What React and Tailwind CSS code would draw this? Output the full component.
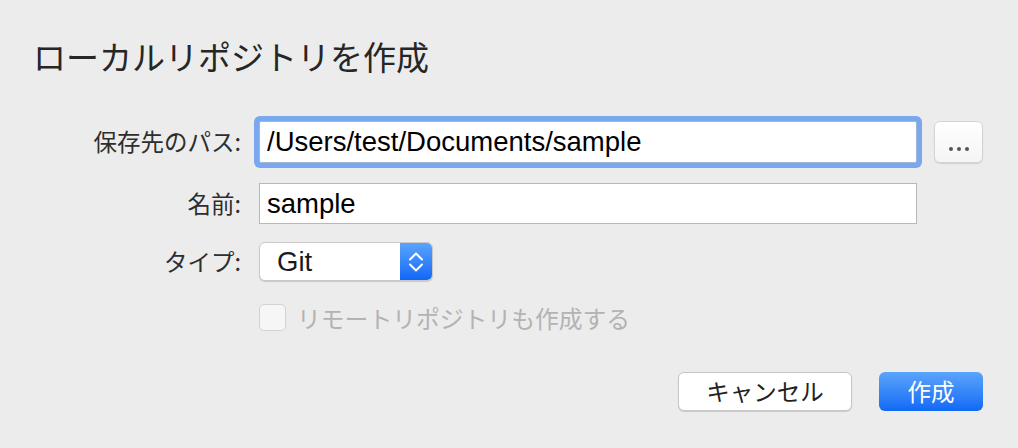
import { useState } from 'react';

const jp = 'font-["Noto_Sans_CJK_JP","Noto_Sans",sans-serif]';
const latin = 'font-["Liberation_Sans","Noto_Sans_CJK_JP",sans-serif]';

function Label({ children }) {
  return (
    <div className={`w-[208px] shrink-0 text-right text-[23.5px] leading-none text-[#2e2e2e] ${jp}`}>
      {children}
    </div>
  );
}

function Chevrons() {
  return (
    <svg width="16" height="26" viewBox="0 0 16 26" fill="none" stroke="white" strokeWidth="2" strokeLinecap="round" strokeLinejoin="round">
      <path d="M2 10.5L8 4.5l6 6" />
      <path d="M2 15.5l6 6 6-6" />
    </svg>
  );
}

export default function App() {
  const [path, setPath] = useState('/Users/test/Documents/sample');
  const [name, setName] = useState('sample');

  return (
    <div className="w-[1018px] h-[448px] bg-[#ececec] pl-[33px] pt-[38px] overflow-hidden">
      <h1 className={`text-[33px] leading-[36px] text-[#262626] ${jp}`}>ローカルリポジトリを作成</h1>

      {/* path row */}
      <div className="flex items-center mt-[47px]">
        <Label>保存先のパス:</Label>
        <div className="ml-[18px] w-[658px] h-[42px] rounded-[2px] ring-[5px] ring-[#79a8ee] border border-[#9fb6d8] bg-white flex items-center">
          <input
            value={path}
            onChange={(e) => setPath(e.target.value)}
            className={`w-full bg-transparent outline-none pl-[7px] text-[27.5px] text-black ${latin}`}
          />
        </div>
        <button className="ml-[17px] w-[49px] h-[42px] rounded-[6px] bg-gradient-to-b from-white to-[#f5f5f5] border border-[#d4d4d4] shadow-[0_1px_1px_rgba(0,0,0,0.12)] flex items-end justify-center pb-[11px] gap-[4px]">
          <span className="w-[4px] h-[4px] rounded-full bg-[#555]" />
          <span className="w-[4px] h-[4px] rounded-full bg-[#555]" />
          <span className="w-[4px] h-[4px] rounded-full bg-[#555]" />
        </button>
      </div>

      {/* name row */}
      <div className="flex items-center mt-[20px]">
        <Label>名前:</Label>
        <div className="ml-[18px] w-[658px] h-[41px] border border-[#b8b8b8] bg-white flex items-center">
          <input
            value={name}
            onChange={(e) => setName(e.target.value)}
            className={`w-full bg-transparent outline-none pl-[7px] text-[27.5px] text-black ${latin}`}
          />
        </div>
      </div>

      {/* type row */}
      <div className="flex items-center mt-[18px]">
        <Label>タイプ:</Label>
        <div className="ml-[18px] w-[174px] h-[39px] rounded-[6px] bg-white border border-[#c9c9c9] shadow-[0_1px_1px_rgba(0,0,0,0.15)] flex overflow-hidden">
          <div className={`flex-1 flex items-center pl-[17px] text-[27.5px] text-[#1a1a1a] ${latin}`}>Git</div>
          <div className="w-[32px] bg-gradient-to-b from-[#5aa4fb] to-[#0f67f6] flex items-center justify-center">
            <Chevrons />
          </div>
        </div>
      </div>

      {/* remote option */}
      <div className="flex items-center mt-[23px] ml-[226px]">
        <div className="w-[27px] h-[27px] rounded-[5px] border border-[#d3d3d3] bg-[#f6f6f6]" />
        <span className={`ml-[11px] text-[23.8px] leading-none text-[#b3b3b3] ${jp}`}>リモートリポジトリも作成する</span>
      </div>

      {/* dialog actions */}
      <div className="flex justify-end mt-[41px] pr-[35px] gap-[27px]">
        <button className={`w-[174px] h-[39px] rounded-[6px] bg-white border border-[#c6c6c6] shadow-[0_1px_1px_rgba(0,0,0,0.15)] text-[23.5px] leading-none text-[#222] ${jp}`}>
          キャンセル
        </button>
        <button className={`w-[104px] h-[39px] rounded-[6px] bg-gradient-to-b from-[#5ba4fb] to-[#0f68f5] text-[23.5px] leading-none text-white ${jp}`}>
          作成
        </button>
      </div>
    </div>
  );
}
